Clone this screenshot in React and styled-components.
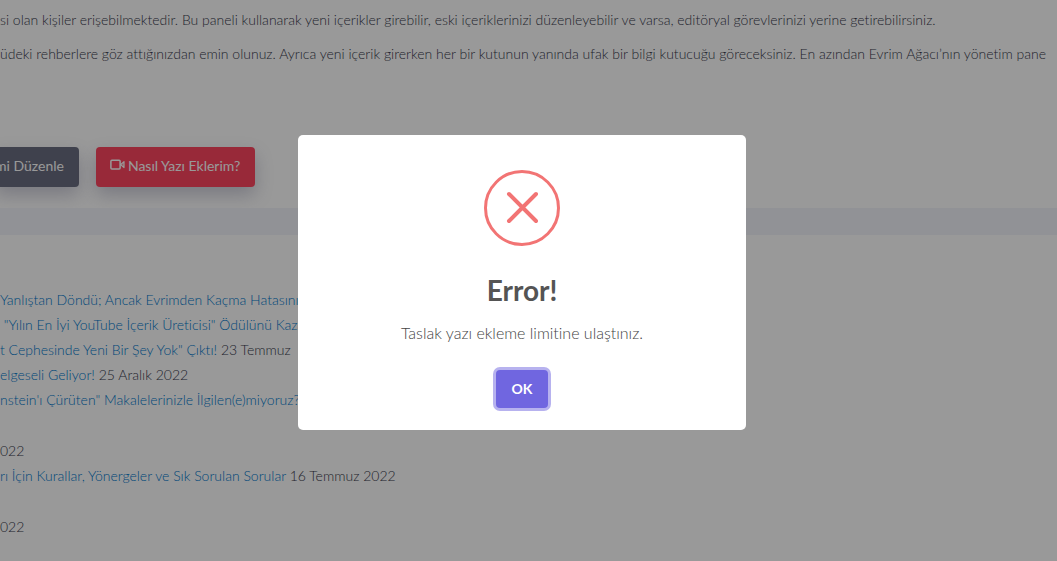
import React from "react";
import styled, { createGlobalStyle, css } from "styled-components";

const GlobalStyle = createGlobalStyle`
  *, *::before, *::after { box-sizing: border-box; }
  body {
    margin: 0;
    background: #f2f3fa;
    color: #383a4c;
    font: 300 14px/20px Lato, "Open Sans", sans-serif;
    font-variant-ligatures: none;
  }
`;

const Page = styled.main`
  display: flex;
  flex-direction: column;
  gap: 27px;
  min-height: 100vh;
  overflow: hidden;
`;

const Card = styled.section`
  background: #fff;
  white-space: nowrap;
  overflow: hidden;
`;

const Intro = styled(Card)`
  padding: 10px 0 21px;
`;

const News = styled(Card)`
  flex: 1;
  padding: 52px 0 20px;
`;

const Paragraph = styled.p`
  margin: 0 0 14px;
`;

const Actions = styled.div`
  display: flex;
  gap: 17px;
  margin: 83px 0 0 -5px;
`;

const ActionButton = styled.button`
  display: flex;
  align-items: center;
  gap: 3px;
  height: 40px;
  padding: 0 15px 2px 14px;
  border: 0;
  border-radius: 4px;
  background: ${(p) => p.$color};
  box-shadow: 0 8px 18px rgba(70, 70, 110, 0.28);
  color: #fff;
  font: inherit;
  font-weight: 400;
  font-variant-ligatures: none;
  cursor: pointer;
  ${(p) =>
    p.$flush &&
    css`
      padding-left: 0;
      border-top-left-radius: 0;
      border-bottom-left-radius: 0;
    `}
`;

const NewsList = styled.ul`
  margin: 0;
  padding: 0;
  list-style: none;
  line-height: 25px;
`;

const NewsItem = styled.li`
  margin-top: ${(p) => (p.$spaced ? "26px" : "0")};
`;

const NewsLink = styled.a`
  color: #0078cc;
  text-decoration: none;
`;

const Overlay = styled.div`
  position: fixed;
  inset: 0;
  display: flex;
  align-items: center;
  justify-content: center;
  padding: 4px 13px 0 0;
  background: rgba(0, 0, 0, 0.4);
`;

const Dialog = styled.div`
  display: flex;
  flex-direction: column;
  align-items: center;
  width: 448px;
  max-width: 100%;
  padding: 35px 20px 22px;
  border-radius: 5px;
  background: #fff;
  color: #545454;
`;

const DialogTitle = styled.h2`
  margin: 26px 0 0;
  font-size: 28px;
  font-weight: 700;
  line-height: 36px;
`;

const DialogText = styled.p`
  margin: 13px 0 0;
  color: #444;
  font-size: 16px;
  line-height: 24px;
`;

const ConfirmButton = styled.button`
  height: 38px;
  margin-top: 25px;
  padding: 0 16px;
  border: 0;
  border-radius: 4px;
  background: #7066e0;
  box-shadow: 0 0 0 3px #b7b2ef;
  color: #fff;
  font: inherit;
  font-size: 14px;
  font-weight: 700;
  cursor: pointer;
`;

const news = [
  { title: "Yanlıştan Döndü; Ancak Evrimden Kaçma Hatasını" },
  { title: "\u00a0\"Yılın En İyi YouTube İçerik Üreticisi\" Ödülünü Kazandı!" },
  { title: "t Cephesinde Yeni Bir Şey Yok\" Çıktı!", date: "23 Temmuz" },
  { title: "elgeseli Geliyor!", date: "25 Aralık 2022" },
  { title: "nstein'ı Çürüten\" Makalelerinizle İlgilen(e)miyoruz?" },
  { date: "022", spaced: true },
  { title: "rı İçin Kurallar, Yönergeler ve Sık Sorulan Sorular", date: "16 Temmuz 2022" },
  { date: "022", spaced: true },
];

function VideoIcon() {
  return (
    <svg width="15" height="14" viewBox="0 0 15 14" fill="none" stroke="#fff" strokeWidth="1.5" aria-hidden="true">
      <rect x="0.9" y="1.2" width="9.2" height="8.8" rx="1" />
      <path d="M10.6 5.6 14 2.6v6z" fill="#fff" fillOpacity="0.4" strokeWidth="1.2" strokeLinejoin="round" />
    </svg>
  );
}

function ErrorIcon() {
  return (
    <svg width="76" height="76" viewBox="0 0 76 76" fill="none" stroke="#f27474" aria-hidden="true">
      <circle cx="38" cy="38" r="36.5" strokeWidth="3" />
      <path d="M25 24 52 51M52 24 25 51" strokeWidth="4" strokeLinecap="round" />
    </svg>
  );
}

export default function App() {
  return (
    <>
      <GlobalStyle />
      <Page>
        <Intro>
          <Paragraph>
            si olan kişiler erişebilmektedir. Bu paneli kullanarak yeni içerikler girebilir, eski içeriklerinizi
            düzenleyebilir ve varsa, editöryal görevlerinizi yerine getirebilirsiniz.
          </Paragraph>
          <Paragraph>
            üdeki rehberlere göz attığınızdan emin olunuz. Ayrıca yeni içerik girerken her bir kutunun yanında ufak
            bir bilgi kutucuğu göreceksiniz. En azından Evrim Ağacı’nın yönetim pane
          </Paragraph>
          <Actions>
            <ActionButton type="button" $color="#6a6d80" $flush>mi Düzenle</ActionButton>
            <ActionButton type="button" $color="#fd4560">
              <VideoIcon />
              Nasıl Yazı Eklerim?
            </ActionButton>
          </Actions>
        </Intro>
        <News>
          <NewsList>
            {news.map((item, i) => (
              <NewsItem key={i} $spaced={item.spaced}>
                {item.title && <NewsLink href="#">{item.title}</NewsLink>} {item.date}
              </NewsItem>
            ))}
          </NewsList>
        </News>
      </Page>
      <Overlay>
        <Dialog role="dialog" aria-modal="true" aria-labelledby="dialog-title" aria-describedby="dialog-text">
          <ErrorIcon />
          <DialogTitle id="dialog-title">Error!</DialogTitle>
          <DialogText id="dialog-text">Taslak yazı ekleme limitine ulaştınız.</DialogText>
          <ConfirmButton type="button">OK</ConfirmButton>
        </Dialog>
      </Overlay>
    </>
  );
}
